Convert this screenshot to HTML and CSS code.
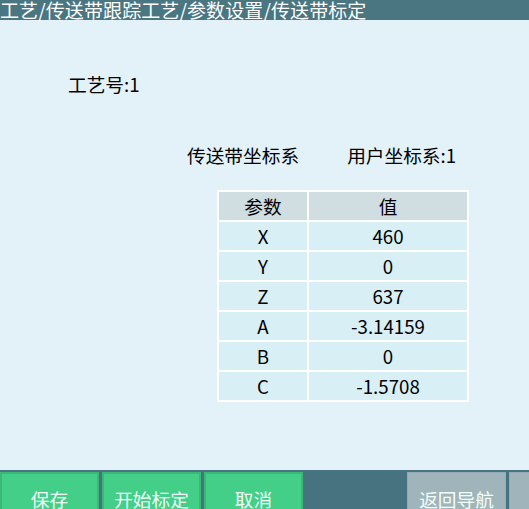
FILE: index.html
```html
<!DOCTYPE html>
<html lang="zh">
<head>
<meta charset="utf-8">
<title>传送带标定</title>
<link rel="stylesheet" href="styles.css">
</head>
<body>
<div class="titlebar">工艺/传送带跟踪工艺/参数设置/传送带标定</div>
<div class="content">
  <div class="craft">工艺号:1</div>
  <div class="coords">
    <span class="coord-a">传送带坐标系</span>
    <span class="coord-b">用户坐标系:1</span>
  </div>
  <div class="table">
    <div class="cell head">参数</div><div class="cell head">值</div>
    <div class="cell">X</div><div class="cell">460</div>
    <div class="cell">Y</div><div class="cell">0</div>
    <div class="cell">Z</div><div class="cell">637</div>
    <div class="cell">A</div><div class="cell">-3.14159</div>
    <div class="cell">B</div><div class="cell">0</div>
    <div class="cell">C</div><div class="cell">-1.5708</div>
  </div>
</div>
<div class="bottombar">
  <div class="btn green">保存</div>
  <div class="btn green">开始标定</div>
  <div class="btn green">取消</div>
  <div class="btn gray nav">返回导航</div>
  <div class="btn gray"></div>
</div>
</body>
</html>
```
FILE: styles.css
```css
html, body {
  margin: 0;
  padding: 0;
}
body {
  width: 529px;
  height: 509px;
  overflow: hidden;
  display: flex;
  flex-direction: column;
  background: #e3f2f8;
  font-family: "Noto Sans CJK SC", "Noto Sans", sans-serif;
  font-size: 18.7px;
  color: #000;
}
.titlebar {
  height: 20px;
  line-height: 20px;
  font-size: 19px;
  letter-spacing: 0.1px;
  background: #4a7682;
  color: #ffffff;
  white-space: nowrap;
  flex: none;
}
.content {
  flex: 1;
  display: flex;
  flex-direction: column;
}
.craft {
  margin-top: 52px;
  padding-left: 68px;
  line-height: 24px;
}
.coords {
  margin-top: 47px;
  padding-left: 187px;
  line-height: 24px;
  display: flex;
  gap: 48px;
}
.table {
  margin-top: 23px;
  margin-left: 217px;
  align-self: flex-start;
  display: grid;
  grid-template-columns: 88px 158px;
  grid-auto-rows: 28px;
  gap: 2px;
  padding: 2px;
  background: #ffffff;
}
.cell {
  background: #d8eff6;
  display: flex;
  align-items: center;
  justify-content: center;
  line-height: 28px;
}
.cell.head {
  background: #d0dde1;
}
.bottombar {
  flex: none;
  height: 39px;
  background: #47727f;
  display: flex;
  gap: 3px;
  padding-top: 2px;
  box-sizing: border-box;
  overflow: hidden;
}
.btn {
  flex: none;
  width: 99px;
  height: 52px;
  display: flex;
  align-items: center;
  justify-content: center;
  color: #f2fff8;
  box-sizing: border-box;
}
.green {
  background: #43cf88;
  box-shadow: inset 0 0 0 2px #3bb877;
}
.gray {
  background: #a0b5bb;
  box-shadow: inset 0 0 0 1px #97acb2;
}
.nav {
  margin-left: 101px;
}
```
